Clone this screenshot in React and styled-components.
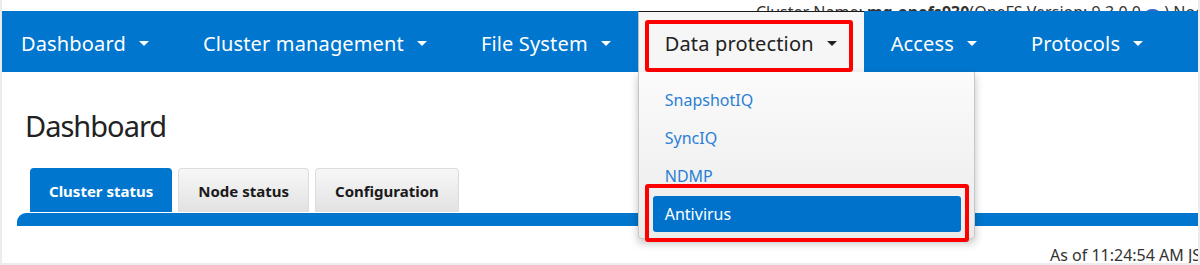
import styled, { createGlobalStyle } from 'styled-components'

const GlobalStyle = createGlobalStyle`
    html, body {
        margin: 0;
        padding: 0;
        background: #ffffff;
    }
    body {
        font-family: "Noto Sans", "Open Sans", sans-serif;
    }
`

const navItems = ['Dashboard', 'Cluster management', 'File System', 'Data protection', 'Access', 'Protocols']
const menuItems = ['SnapshotIQ', 'SyncIQ', 'NDMP', 'Antivirus']
const tabs = ['Cluster status', 'Node status', 'Configuration']

export default function App() {
    return (
        <Frame>
            <GlobalStyle />
            <TopStrip>
                <ClusterInfo>
                    Cluster Name: <strong>mg-onefs930</strong>(OneFS Version: 9.3.0.0 <StatusDot /> ) Node
                </ClusterInfo>
            </TopStrip>
            <NavBar>
                {navItems.map((item) => {
                    const open = item === 'Data protection'
                    return (
                        <NavItem key={item} $open={open}>
                            {item}
                            <Caret $open={open} />
                            {open && (
                                <Dropdown>
                                    {menuItems.map((entry) => (
                                        <MenuItem key={entry} $active={entry === 'Antivirus'}>
                                            {entry}
                                        </MenuItem>
                                    ))}
                                </Dropdown>
                            )}
                        </NavItem>
                    )
                })}
            </NavBar>
            <Content>
                <Title>Dashboard</Title>
                <TabRow>
                    {tabs.map((tab) => (
                        <Tab key={tab} $active={tab === 'Cluster status'}>
                            {tab}
                        </Tab>
                    ))}
                </TabRow>
                <TabBand />
                <Timestamp>As of 11:24:54 AM JST</Timestamp>
            </Content>
        </Frame>
    )
}

const Frame = styled.div`
    width: 1200px;
    height: 265px;
    box-sizing: border-box;
    border: 2px solid #ececec;
    border-top: none;
    overflow: hidden;
    background: #ffffff;
`
const TopStrip = styled.div`
    height: 11px;
    display: flex;
    justify-content: flex-end;
    align-items: flex-end;
    overflow: hidden;
`
const ClusterInfo = styled.div`
    font-size: 16px;
    line-height: 20px;
    color: #333333;
    white-space: nowrap;
    margin-bottom: -11px;
    margin-right: -16px;
    & strong {
        font-weight: 700;
    }
`
const StatusDot = styled.span`
    display: inline-block;
    width: 15px;
    height: 10px;
    border-radius: 50%;
    background: #3a63c8;
    vertical-align: middle;
`
const NavBar = styled.nav`
    height: 61px;
    background: #0076ce;
    display: flex;
    align-items: stretch;
`
const NavItem = styled.div`
    position: relative;
    display: flex;
    align-items: center;
    padding: 3px 27px 0 26px;
    font-size: 20px;
    letter-spacing: 0.15px;
    color: ${(p) => (p.$open ? '#222222' : '#ffffff')};
    background: ${(p) => (p.$open ? '#f6f6f6' : 'transparent')};
    border-top: 1px solid ${(p) => (p.$open ? '#1a1a1a' : 'transparent')};
    border-left: 1px solid ${(p) => (p.$open ? '#bdbdbd' : 'transparent')};
    white-space: nowrap;
    &:first-child {
        padding-left: 18px;
    }
    ${(p) =>
        p.$open &&
        `
        &::after {
            content: '';
            position: absolute;
            left: 6px;
            right: 11px;
            top: 8px;
            bottom: 0;
            border: 4px solid #ff0000;
            border-radius: 3px;
        }
    `}
`
const Caret = styled.span`
    width: 0;
    height: 0;
    margin-left: 13px;
    border-left: 5px solid transparent;
    border-right: 5px solid transparent;
    border-top: 5px solid ${(p) => (p.$open ? '#222222' : '#ffffff')};
`
const Dropdown = styled.div`
    position: absolute;
    top: 60px;
    left: -1px;
    width: 337px;
    box-sizing: border-box;
    padding: 10px 0 6px;
    background: linear-gradient(#fbfbfb, #ebebeb);
    border: 1px solid #c6c6c6;
    border-top: none;
    border-radius: 0 0 4px 4px;
    box-shadow: 0 4px 8px rgba(0, 0, 0, 0.25);
    z-index: 2;
    letter-spacing: 0;
`
const MenuItem = styled.div`
    position: relative;
    height: 36px;
    margin: ${(p) => (p.$active ? '2px 13px 0 14px' : '0 13px 2px 14px')};
    padding-left: 12px;
    display: flex;
    align-items: center;
    font-size: 16px;
    color: ${(p) => (p.$active ? '#ffffff' : '#2b7fd4')};
    background: ${(p) => (p.$active ? '#0072cc' : 'transparent')};
    border-radius: 3px;
    ${(p) =>
        p.$active &&
        `
        &::after {
            content: '';
            position: absolute;
            inset: -12px -8px -10px -8px;
            border: 4px solid #ff0000;
            border-radius: 3px;
        }
    `}
`
const Content = styled.div`
    padding: 0 0 0 15px;
`
const Title = styled.h1`
    margin: 0;
    padding: 36px 0 0 8px;
    height: 62px;
    box-sizing: border-box;
    font-size: 29px;
    font-weight: 400;
    line-height: 36px;
    letter-spacing: -1px;
    color: #222222;
`
const TabRow = styled.div`
    display: flex;
    gap: 6px;
    padding-left: 13px;
    margin-top: 34px;
`
const Tab = styled.div`
    height: 44px;
    display: flex;
    align-items: center;
    justify-content: center;
    padding: 0 ${(p) => (p.$active ? '18px' : '19px')};
    font-size: 15px;
    font-weight: 700;
    color: ${(p) => (p.$active ? '#ffffff' : '#1a1a1a')};
    background: ${(p) => (p.$active ? '#0076ce' : 'linear-gradient(#f7f7f7, #e2e2e2)')};
    border: 1px solid ${(p) => (p.$active ? '#0076ce' : '#dcdcdc')};
    border-bottom: none;
    border-radius: 4px 4px 0 0;
    box-sizing: border-box;
    min-width: ${(p) => (p.$active ? '142px' : '0')};
`
const TabBand = styled.div`
    height: 13px;
    margin-top: 1px;
    background: #0076ce;
    border-top-left-radius: 9px;
`
const Timestamp = styled.div`
    margin-top: 20px;
    padding-left: 1033px;
    font-size: 16px;
    line-height: 18px;
    color: #333333;
    white-space: nowrap;
`
